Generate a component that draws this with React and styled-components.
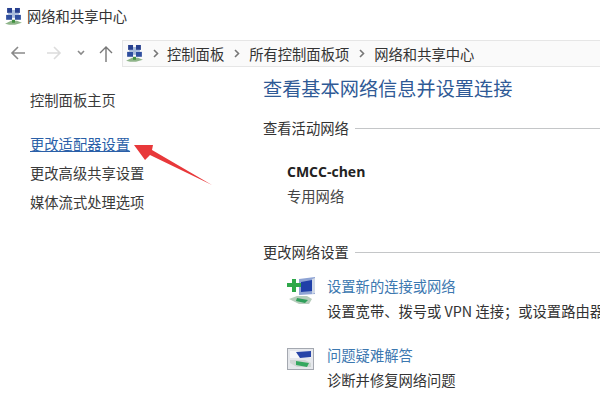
import React from 'react'
import styled, { createGlobalStyle } from 'styled-components'

const GlobalStyle = createGlobalStyle`
  html, body { margin: 0; padding: 0; background: #fff; }
  body { font-family: "Noto Sans CJK SC", "Open Sans", sans-serif; color: #2a2a2a; }
`

const NetIcon = ({ size = 17 }) => (
  <svg width={size} height={size * 1.1} viewBox="0 0 17 19">
    <rect x="2" y="1" width="5" height="5" fill="#27408f" />
    <rect x="10" y="1" width="5" height="5" fill="#27408f" />
    <rect x="1" y="8" width="6" height="5" fill="#2f4f9f" />
    <rect x="10" y="8" width="6" height="5" fill="#2f4f9f" />
    <rect x="7" y="3" width="3" height="8" fill="#a8bcdc" />
    <rect x="3" y="6" width="11" height="2" fill="#a8bcdc" />
    <path d="M0 17 L6 14 H12 L17 16 L10 18 H4 Z" fill="#8fb58a" />
    <rect x="7" y="13" width="3" height="3" fill="#3f8f3f" />
  </svg>
)

const SetupIcon = () => (
  <svg width="30" height="29" viewBox="0 0 30 29">
    <path d="M12 3 L28 1 V18 L12 19 Z" fill="#8ea3d4" />
    <path d="M14 6 L25 4 V15 L14 16 Z" fill="#1f3fa8" />
    <path d="M25 3 L28 2 V17 L25 18 Z" fill="#d0d8e6" />
    <path d="M5 3 H9 V7 H14 V11 H9 V16 H5 V11 H0 V7 H5 Z" fill="#2fa84a" />
    <path d="M2 23 L10 20 H20 L25 23 L22 28 H12 Z" fill="#b7cdbc" />
    <path d="M10 22 L21 24 L18 27 L9 25 Z" fill="#2f9f5a" />
  </svg>
)

const TroubleIcon = () => (
  <svg width="27" height="22" viewBox="0 0 27 22">
    <rect x="0.5" y="0.5" width="26" height="21" fill="#e6e8ec" stroke="#a4a8b0" />
    <rect x="3" y="3" width="21" height="7" fill="#f7f8fa" />
    <path d="M9 4 L24 3 V9 L13 10 Z" fill="#2845a8" />
    <path d="M3 12 H18 L24 15 V19 H10 L3 15 Z" fill="#cfd6d4" />
    <path d="M9 13 L22 15 L20 19 L9 17 Z" fill="#35a860" />
  </svg>
)

const BreadcrumbChevron = ({ right }) => (
  <Chevron $right={right} width="6" height="9" viewBox="0 0 6 9" fill="none" stroke="#777" strokeWidth="1.6">
    <path d="M1 1l3.5 3.5L1 8" />
  </Chevron>
)

const Arrow = styled.svg`
  position: absolute;
  left: 132px;
  top: 142px;
`

const Page = styled.div`
  position: relative;
  width: 600px;
  height: 407px;
  overflow: hidden;
  background: #fff;
`

const TitleBar = styled.div`
  display: flex;
  align-items: center;
  gap: 5px;
  height: 20px;
  padding: 6px 0 0 5px;
  font-size: 14.3px;
  line-height: 20px;
  color: #333;
`

const NavBar = styled.div`
  display: flex;
  align-items: center;
  height: 26px;
  margin-top: 14px;
  padding-left: 10px;
`

const NavButton = styled.div`
  display: flex;
  align-items: center;
  justify-content: center;
  margin-left: ${p => p.$ml || 0}px;
  color: ${p => p.$color};
`

const AddressBar = styled.div`
  display: flex;
  align-items: center;
  flex: 1;
  height: 25px;
  margin-left: 9px;
  padding-left: 3px;
  background: #fafafa;
  border: 1px solid #e6e6e6;
  border-right: none;
  font-size: 14.3px;
  color: #333;
  white-space: nowrap;
`

const Chevron = styled.svg`
  margin: 0 ${p => p.$right}px 0 10px;
`

const Body = styled.div`
  display: flex;
`

const Sidebar = styled.div`
  display: flex;
  flex-direction: column;
  width: 233px;
  padding: 24px 0 0 30px;
  font-size: 14.3px;
`

const SideLink = styled.div`
  height: 29px;
  line-height: 20px;
  margin-top: ${p => p.$gap || 0}px;
  color: ${p => p.$active ? '#2a5fa8' : '#3a3a3a'};
  text-decoration: ${p => p.$active ? 'underline' : 'none'};
  text-underline-offset: 1px;
`

const Main = styled.div`
  flex: 1;
  min-width: 0;
  padding-top: 8px;
`

const Heading = styled.div`
  font-size: 19.2px;
  line-height: 28px;
  color: #2f5a96;
  white-space: nowrap;
`

const SectionTitle = styled.div`
  display: flex;
  align-items: center;
  gap: 6px;
  margin-top: ${p => p.$top}px;
  font-size: 14.3px;
  line-height: 20px;
  color: #333;
  white-space: nowrap;
  &::after {
    content: "";
    flex: 1;
    height: 1px;
    background: #c4c6c8;
  }
`

const Network = styled.div`
  margin: 24px 0 0 24px;
`

const NetworkName = styled.div`
  font-family: "Open Sans", "Noto Sans", sans-serif;
  font-weight: 700;
  font-size: 14px;
  line-height: 20px;
  color: #222;
`

const NetworkType = styled.div`
  margin-top: 4px;
  font-size: 14.3px;
  line-height: 20px;
  color: #444;
`

const Task = styled.div`
  display: flex;
  gap: ${p => p.$gap}px;
  margin-top: ${p => p.$top}px;
  padding-left: ${p => p.$pad}px;
`

const IconSlot = styled.div`
  flex: none;
  padding-top: ${p => p.$top}px;
`

const TaskText = styled.div`
  min-width: 0;
  font-size: 14.3px;
  line-height: 20px;
  white-space: nowrap;
`

const TaskLink = styled.div`
  color: #3c78b0;
`

const TaskDesc = styled.div`
  margin-top: 5px;
  color: #333;
`

export default function App() {
  return (
    <Page>
      <GlobalStyle />
      <TitleBar>
        <NetIcon />
        网络和共享中心
      </TitleBar>
      <NavBar>
        <NavButton $color="#8a8a8a">
          <svg width="15" height="14" viewBox="0 0 15 14" fill="none" stroke="currentColor" strokeWidth="1.6"><path d="M15 7H2M8 1 2 7l6 6" /></svg>
        </NavButton>
        <NavButton $ml={22} $color="#dcdcdc">
          <svg width="15" height="14" viewBox="0 0 15 14" fill="none" stroke="currentColor" strokeWidth="1.6"><path d="M0 7h13M7 1l6 6-6 6" /></svg>
        </NavButton>
        <NavButton $ml={15} $color="#8a8a8a">
          <svg width="8" height="6" viewBox="0 0 8 6" fill="none" stroke="currentColor" strokeWidth="1.6"><path d="M1 1l3 3 3-3" /></svg>
        </NavButton>
        <NavButton $ml={14} $color="#777">
          <svg width="14" height="17" viewBox="0 0 14 17" fill="none" stroke="currentColor" strokeWidth="1.4"><path d="M7 17V2M1 8l6-6 6 6" /></svg>
        </NavButton>
        <AddressBar>
          <NetIcon />
          <BreadcrumbChevron right={8} />
          控制面板
          <BreadcrumbChevron right={9} />
          所有控制面板项
          <BreadcrumbChevron right={9} />
          网络和共享中心
        </AddressBar>
      </NavBar>
      <Body>
        <Sidebar>
          <SideLink>控制面板主页</SideLink>
          <SideLink $gap={15} $active>更改适配器设置</SideLink>
          <SideLink>更改高级共享设置</SideLink>
          <SideLink>媒体流式处理选项</SideLink>
        </Sidebar>
        <Main>
          <Heading>查看基本网络信息并设置连接</Heading>
          <SectionTitle $top={16}>查看活动网络</SectionTitle>
          <Network>
            <NetworkName>CMCC-chen</NetworkName>
            <NetworkType>专用网络</NetworkType>
          </Network>
          <SectionTitle $top={36}>更改网络设置</SectionTitle>
          <Task $top={14} $pad={24} $gap={10}>
            <IconSlot $top={0}><SetupIcon /></IconSlot>
            <TaskText>
              <TaskLink>设置新的连接或网络</TaskLink>
              <TaskDesc>设置宽带、拨号或 VPN 连接；或设置路由器或接入点。</TaskDesc>
            </TaskText>
          </Task>
          <Task $top={24} $pad={24} $gap={13}>
            <IconSlot $top={3}><TroubleIcon /></IconSlot>
            <TaskText>
              <TaskLink>问题疑难解答</TaskLink>
              <TaskDesc>诊断并修复网络问题</TaskDesc>
            </TaskText>
          </Task>
        </Main>
      </Body>
      <Arrow width="82" height="46" viewBox="0 0 82 46">
        <path d="M2 3 L21 3 L20 8 L80 43 L18 13 L13 18 Z" fill="#e8383a" />
      </Arrow>
    </Page>
  )
}
